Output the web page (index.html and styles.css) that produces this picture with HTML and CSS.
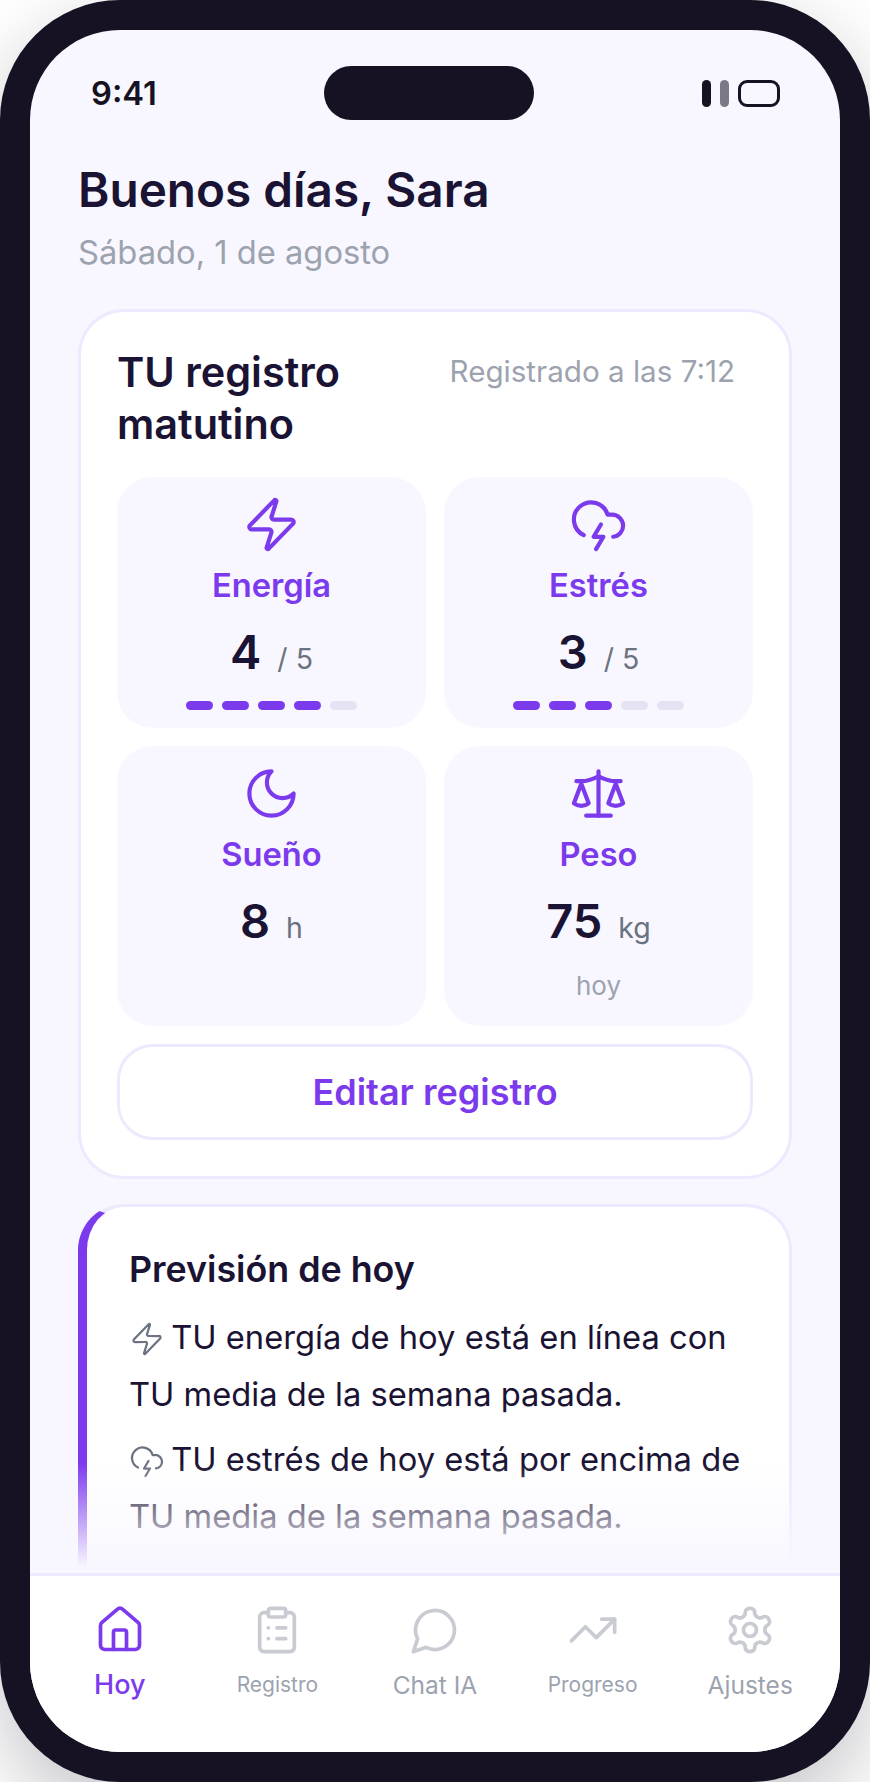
FILE: index.html
```html
<!DOCTYPE html>
<html lang="es">
<head>
    <meta charset="UTF-8">
    <meta name="viewport" content="width=device-width, initial-scale=1.0">
    <title>Hoy</title>
    <link rel="stylesheet" href="styles.css">
</head>
<body>
    <div class="phone">
        <div class="screen">
            <div class="status">
                <span class="time">9:41</span>
                <div class="island"></div>
                <div class="status-icons">
                    <span class="bar"></span>
                    <span class="bar bar-dim"></span>
                    <span class="battery"></span>
                </div>
            </div>

            <div class="content">
                <h1 class="greeting">Buenos días, Sara</h1>
                <p class="date">Sábado, 1 de agosto</p>

                <div class="card">
                    <div class="card-head">
                        <h2 class="card-title">TU registro matutino</h2>
                        <span class="card-meta">Registrado a las 7:12</span>
                    </div>
                    <div class="tiles">
                        <div class="tile">
                            <svg class="tile-icon" viewBox="0 0 24 24"><path d="M4 14a1 1 0 0 1-.78-1.63l9.9-10.2a.5.5 0 0 1 .86.46l-1.92 6.02A1 1 0 0 0 13 10h7a1 1 0 0 1 .78 1.63l-9.9 10.2a.5.5 0 0 1-.86-.46l1.92-6.02A1 1 0 0 0 11 14z"/></svg>
                            <p class="tile-label">Energía</p>
                            <p class="tile-value">4<span class="unit">/ 5</span></p>
                            <div class="dots">
                                <span class="dot on"></span><span class="dot on"></span><span class="dot on"></span><span class="dot on"></span><span class="dot"></span>
                            </div>
                        </div>
                        <div class="tile">
                            <svg class="tile-icon" viewBox="0 0 24 24"><path d="M6 16.326A7 7 0 1 1 15.71 8h1.79a4.5 4.5 0 0 1 .5 8.973"/><path d="m13 12-3 5h4l-3 5"/></svg>
                            <p class="tile-label">Estrés</p>
                            <p class="tile-value">3<span class="unit">/ 5</span></p>
                            <div class="dots">
                                <span class="dot on"></span><span class="dot on"></span><span class="dot on"></span><span class="dot"></span><span class="dot"></span>
                            </div>
                        </div>
                        <div class="tile">
                            <svg class="tile-icon" viewBox="0 0 24 24"><path d="M12 3a6 6 0 0 0 9 9 9 9 0 1 1-9-9Z"/></svg>
                            <p class="tile-label">Sueño</p>
                            <p class="tile-value">8<span class="unit">h</span></p>
                        </div>
                        <div class="tile">
                            <svg class="tile-icon" viewBox="0 0 24 24"><path d="m16 16 3-8 3 8c-.87.65-1.92 1-3 1s-2.13-.35-3-1Z"/><path d="m2 16 3-8 3 8c-.87.65-1.92 1-3 1s-2.13-.35-3-1Z"/><path d="M7 21h10"/><path d="M12 3v18"/><path d="M3 7h2c2 0 5-1 7-2 2 1 5 2 7 2h2"/></svg>
                            <p class="tile-label">Peso</p>
                            <p class="tile-value">75<span class="unit">kg</span></p>
                            <p class="tile-note">hoy</p>
                        </div>
                    </div>
                    <button class="edit-btn">Editar registro</button>
                </div>

                <div class="card forecast">
                    <h3 class="forecast-title">Previsión de hoy</h3>
                    <p class="forecast-line"><svg class="inline-icon" viewBox="0 0 24 24"><path d="M4 14a1 1 0 0 1-.78-1.63l9.9-10.2a.5.5 0 0 1 .86.46l-1.92 6.02A1 1 0 0 0 13 10h7a1 1 0 0 1 .78 1.63l-9.9 10.2a.5.5 0 0 1-.86-.46l1.92-6.02A1 1 0 0 0 11 14z"/></svg> TU energía de hoy está en línea con TU media de la semana pasada.</p>
                    <p class="forecast-line"><svg class="inline-icon" viewBox="0 0 24 24"><path d="M6 16.326A7 7 0 1 1 15.71 8h1.79a4.5 4.5 0 0 1 .5 8.973"/><path d="m13 12-3 5h4l-3 5"/></svg> TU estrés de hoy está por encima de TU media de la semana pasada.</p>
                </div>
                <div class="fade"></div>
            </div>

            <nav class="nav">
                <div class="nav-item active">
                    <svg class="nav-icon" viewBox="0 0 24 24"><path d="M15 21v-8a1 1 0 0 0-1-1h-4a1 1 0 0 0-1 1v8"/><path d="M3 10a2 2 0 0 1 .709-1.528l7-5.999a2 2 0 0 1 2.582 0l7 5.999A2 2 0 0 1 21 10v9a2 2 0 0 1-2 2H5a2 2 0 0 1-2-2z"/></svg>
                    <span class="nav-label big">Hoy</span>
                </div>
                <div class="nav-item">
                    <svg class="nav-icon" viewBox="0 0 24 24"><rect x="8" y="2" width="8" height="4" rx="1"/><path d="M16 4h2a2 2 0 0 1 2 2v14a2 2 0 0 1-2 2H6a2 2 0 0 1-2-2V6a2 2 0 0 1 2-2h2"/><path d="M12 11h4"/><path d="M12 16h4"/><path d="M8 11h.01"/><path d="M8 16h.01"/></svg>
                    <span class="nav-label small">Registro</span>
                </div>
                <div class="nav-item">
                    <svg class="nav-icon" viewBox="0 0 24 24"><path d="M7.9 20A9 9 0 1 0 4 16.1L2 22Z"/></svg>
                    <span class="nav-label">Chat IA</span>
                </div>
                <div class="nav-item">
                    <svg class="nav-icon" viewBox="0 0 24 24"><path d="M16 7h6v6"/><path d="m22 7-8.5 8.5-5-5L2 17"/></svg>
                    <span class="nav-label small">Progreso</span>
                </div>
                <div class="nav-item">
                    <svg class="nav-icon" viewBox="0 0 24 24"><path d="M12.22 2h-.44a2 2 0 0 0-2 2v.18a2 2 0 0 1-1 1.73l-.43.25a2 2 0 0 1-2 0l-.15-.08a2 2 0 0 0-2.73.73l-.22.38a2 2 0 0 0 .73 2.73l.15.1a2 2 0 0 1 1 1.72v.51a2 2 0 0 1-1 1.74l-.15.09a2 2 0 0 0-.73 2.73l.22.38a2 2 0 0 0 2.73.73l.15-.08a2 2 0 0 1 2 0l.43.25a2 2 0 0 1 1 1.73V20a2 2 0 0 0 2 2h.44a2 2 0 0 0 2-2v-.18a2 2 0 0 1 1-1.73l.43-.25a2 2 0 0 1 2 0l.15.08a2 2 0 0 0 2.73-.73l.22-.39a2 2 0 0 0-.73-2.73l-.15-.08a2 2 0 0 1-1-1.74v-.5a2 2 0 0 1 1-1.74l.15-.09a2 2 0 0 0 .73-2.73l-.22-.38a2 2 0 0 0-2.73-.73l-.15.08a2 2 0 0 1-2 0l-.43-.25a2 2 0 0 1-1-1.73V4a2 2 0 0 0-2-2z"/><circle cx="12" cy="12" r="3"/></svg>
                    <span class="nav-label">Ajustes</span>
                </div>
            </nav>
        </div>
    </div>
</body>
</html>
```

FILE: styles.css
```css
html{
    box-sizing: border-box;
    height: 100%;
}
*,
*::before,
*::after{
    box-sizing: inherit;
    margin: 0;
    padding: 0;
}
body{
    height: 1782px;
    overflow: hidden;
    background: #fff;
    font-family: Inter, "Noto Sans", sans-serif;
    color: #1a1333;
}
svg{
    fill: none;
    stroke: currentColor;
    stroke-width: 1.7;
    stroke-linecap: round;
    stroke-linejoin: round;
}
.phone{
    height: 100%;
    padding: 30px;
    background: #161223;
    border-radius: 120px;
    box-shadow: 0 30px 80px rgba(22, 18, 35, 0.25);
}
.screen{
    height: 100%;
    display: flex;
    flex-direction: column;
    overflow: hidden;
    background: #f8f7ff;
    border-radius: 90px;
}
.status{
    display: flex;
    align-items: center;
    justify-content: space-between;
    padding: 36px 60px 0 61px;
}
.time{
    font-size: 32.7px;
    font-weight: 600;
    color: #161223;
}
.island{
    width: 210px;
    height: 54px;
    border-radius: 27px;
    background: #161223;
}
.status-icons{
    display: flex;
    align-items: center;
    gap: 9px;
}
.bar{
    width: 9px;
    height: 27px;
    border-radius: 5px;
    background: #161223;
}
.bar-dim{
    opacity: 0.55;
}
.battery{
    width: 42px;
    height: 27px;
    border: 3px solid #161223;
    border-radius: 9px;
}
.content{
    position: relative;
    flex: 1;
    min-height: 0;
    overflow: hidden;
    padding: 38px 48px 0;
}
.greeting{
    font-size: 47.7px;
    font-weight: 600;
    line-height: 64px;
}
.date{
    font-size: 32.7px;
    line-height: 44px;
    margin-top: 8px;
    color: #9ca3af;
}
.card{
    margin-top: 35px;
    padding: 36px;
    background: #fff;
    border: 3px solid #ede9fe;
    border-radius: 46px;
}
.card-head{
    display: flex;
    align-items: flex-start;
    gap: 20px;
    margin-top: -2px;
    padding-right: 18px;
}
.card-title{
    flex: 1;
    font-size: 41.4px;
    font-weight: 600;
    line-height: 52px;
}
.card-meta{
    flex-shrink: 0;
    margin-top: 3px;
    font-size: 29.6px;
    line-height: 44px;
    color: #9ca3af;
}
.tiles{
    display: grid;
    grid-template-columns: 1fr 1fr;
    gap: 18px;
    margin-top: 27px;
}
.tile{
    display: flex;
    flex-direction: column;
    align-items: center;
    padding: 18px 18px 18px;
    background: #f8f7ff;
    border-radius: 36px;
}
.tile-icon{
    width: 59px;
    height: 59px;
    color: #7c3aed;
}
.tile-label{
    margin-top: 11px;
    font-size: 32.7px;
    font-weight: 600;
    line-height: 40px;
    color: #7c3aed;
}
.tile-value{
    margin-top: 18px;
    font-size: 47px;
    font-weight: 600;
    line-height: 58px;
}
.unit{
    margin-left: 16px;
    font-size: 28.5px;
    font-weight: 400;
    color: #6b7280;
}
.dots{
    display: flex;
    gap: 9px;
    margin-top: 13px;
}
.dot{
    width: 27px;
    height: 9px;
    border-radius: 5px;
    background: #e5e3f3;
}
.dot.on{
    background: #7c3aed;
}
.tile-note{
    margin-top: 11px;
    margin-bottom: 4px;
    font-size: 26px;
    line-height: 36px;
    color: #9ca3af;
}
.edit-btn{
    display: block;
    width: 100%;
    height: 96px;
    margin-top: 18px;
    font-family: inherit;
    font-size: 36px;
    font-weight: 600;
    color: #7c3aed;
    background: #fff;
    border: 3px solid #ede9fe;
    border-radius: 36px;
}
.forecast{
    margin-top: 25px;
    padding: 37px 36px 140px 42px;
    border-left: 9px solid #7c3aed;
}
.forecast-title{
    margin-bottom: 15px;
    font-size: 35.8px;
    font-weight: 600;
    line-height: 50px;
}
.forecast-line{
    margin-top: 8px;
    font-size: 32.7px;
    line-height: 57px;
}
.inline-icon{
    width: 36px;
    height: 36px;
    margin-right: -3px;
    vertical-align: -8px;
    stroke-width: 1.5;
    color: #6b7280;
}
.fade{
    position: absolute;
    left: 0;
    right: 0;
    bottom: 0;
    height: 110px;
    background: linear-gradient(to bottom, rgba(248, 247, 255, 0), #f8f7ff 95%);
}
.nav{
    display: grid;
    grid-template-columns: repeat(5, 1fr);
    height: 179px;
    padding: 28px 11px 0;
    background: #fff;
    border-top: 3px solid #ede9fe;
}
.nav-item{
    display: flex;
    flex-direction: column;
    align-items: center;
    color: #9ca3af;
}
.nav-icon{
    width: 52px;
    height: 52px;
    color: #c9cbd2;
}
.nav-label{
    margin-top: 12px;
    font-size: 24.5px;
    font-weight: 400;
    line-height: 34px;
}
.nav-label.small{
    font-size: 21px;
}
.nav-label.big{
    font-size: 27px;
    font-weight: 500;
}
.active,
.active .nav-icon{
    color: #7c3aed;
}
```
